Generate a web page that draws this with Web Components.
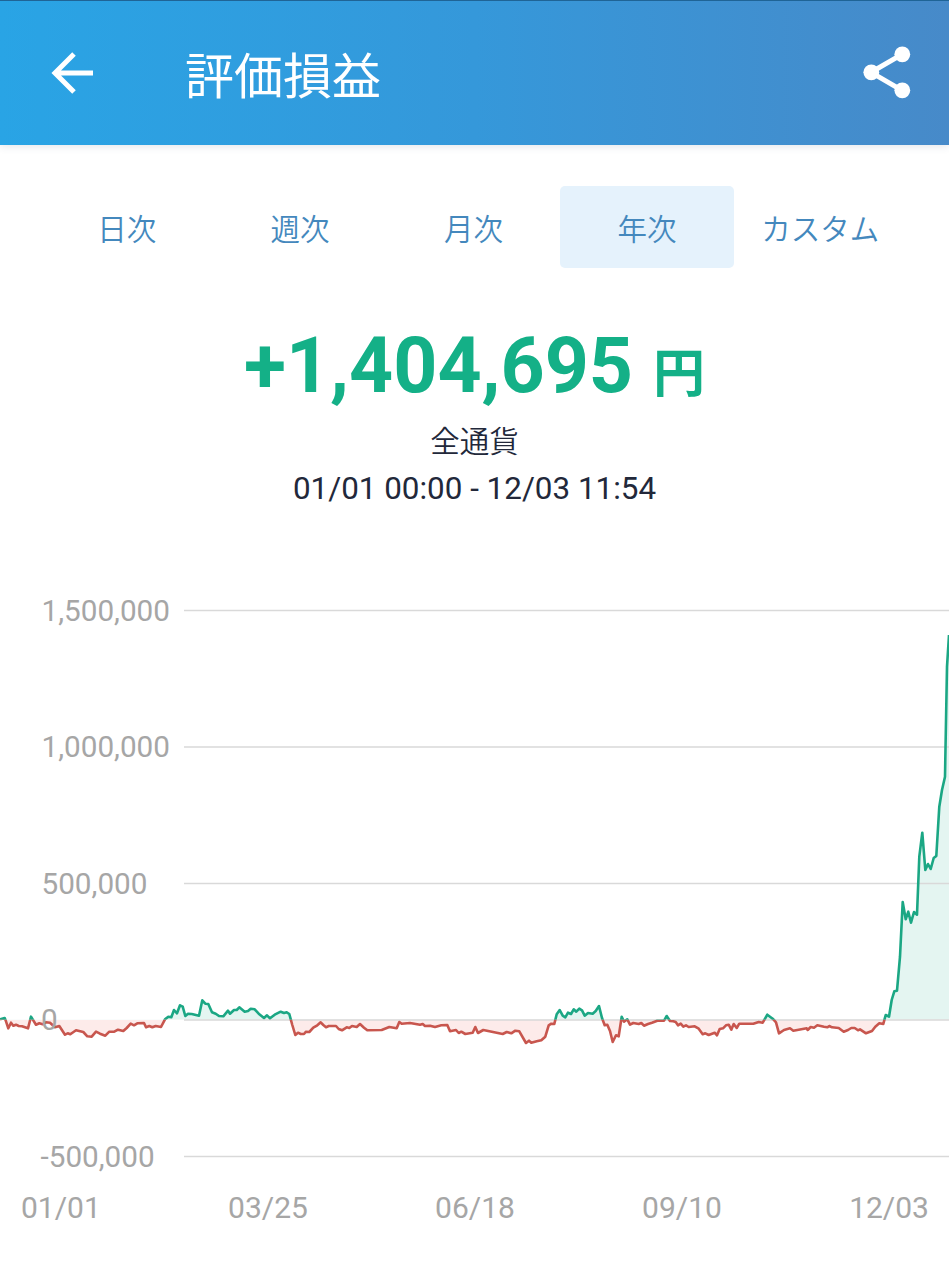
<!DOCTYPE html>
<html lang="ja">
<head>
<meta charset="UTF-8">
<title>評価損益</title>
<style>
  body {
    margin: 0;
    background: #fff;
    font-family: Roboto, "Noto Sans CJK JP", sans-serif;
  }
</style>
</head>
<body>
<profit-page>
  <app-header>評価損益</app-header>
  <period-tabs>
    <period-tab>日次</period-tab>
    <period-tab>週次</period-tab>
    <period-tab>月次</period-tab>
    <period-tab selected>年次</period-tab>
    <period-tab>カスタム</period-tab>
  </period-tabs>
  <profit-summary>
    <span slot="amount">+1,404,695</span>
    <span slot="unit">円</span>
    <span slot="currency">全通貨</span>
    <span slot="range">01/01 00:00 - 12/03 11:54</span>
  </profit-summary>
  <profit-chart></profit-chart>
</profit-page>

<script>
const define = (name, html, setup) => {
  const template = document.createElement("template");
  template.innerHTML = html;
  customElements.define(name, class extends HTMLElement {
    constructor() {
      super();
      const shadow = this.attachShadow({ mode: "open" });
      shadow.append(template.content.cloneNode(true));
      if (setup) setup(shadow);
    }
  });
};

define("profit-page", `
  <style>
    :host {
      display: flex;
      flex-direction: column;
      width: 949px;
      height: 1280px;
      overflow: hidden;
      background: #fff;
    }
  </style>
  <slot></slot>
`);

define("app-header", `
  <style>
    :host {
      display: flex;
      align-items: center;
      box-sizing: border-box;
      flex: none;
      height: 145px;
      padding: 0 31px 0 43px;
      border-top: 1px solid #1f6496;
      background: linear-gradient(90deg, #29a4e5 0%, #3598da 50%, #478ac9 100%);
      background-origin: border-box;
      box-shadow: 0 1px 8px rgba(60, 80, 110, 0.16);
      color: #fff;
    }
    h1 {
      flex: 1;
      margin: 0 0 0 82px;
      padding-top: 10px;
      font-size: 49px;
      line-height: 60px;
      font-weight: 400;
    }
    svg {
      display: block;
      flex: none;
    }
  </style>
  <svg width="60" height="60" viewBox="0 0 60 60" fill="none" stroke="#fff" stroke-width="5">
    <path d="M50 30H12M31 11L12 30L31 49"/>
  </svg>
  <h1><slot></slot></h1>
  <svg width="62" height="62" viewBox="0 0 62 62" fill="#fff" stroke="#fff">
    <path d="M46 12.300L15 30.300L46 48.300" fill="none" stroke-width="5"/>
    <circle cx="46.300" cy="12.300" r="7.900" stroke="none"/>
    <circle cx="15.300" cy="30.300" r="7.900" stroke="none"/>
    <circle cx="46.300" cy="48.300" r="7.900" stroke="none"/>
  </svg>
`);

define("period-tabs", `
  <style>
    :host {
      display: grid;
      grid-template-columns: repeat(5, 1fr);
      flex: none;
      height: 82px;
      margin: 41px 42px 0 40px;
    }
  </style>
  <slot></slot>
`);

define("period-tab", `
  <style>
    :host {
      display: flex;
      align-items: center;
      justify-content: center;
      box-sizing: border-box;
      padding-top: 5px;
      border-radius: 5px;
      color: #4488bd;
      font-size: 29.500px;
      line-height: 40px;
      font-weight: 350;
    }
    :host([selected]) {
      background: #e5f2fc;
    }
  </style>
  <slot></slot>
`);

define("profit-summary", `
  <style>
    :host {
      display: flex;
      flex-direction: column;
      align-items: center;
      flex: none;
      height: 282px;
      color: #22283a;
    }
    .amount {
      display: flex;
      align-items: baseline;
      gap: 20px;
      margin-top: 53px;
      height: 98px;
      line-height: 90px;
      color: #14b087;
      font-size: 77px;
      font-weight: 700;
    }
    .unit {
      font-size: 52px;
      line-height: 60px;
    }
    .currency {
      font-size: 29.500px;
      line-height: 46px;
      font-weight: 350;
    }
    .range {
      font-size: 31.400px;
      line-height: 48px;
    }
  </style>
  <div class="amount">
    <slot name="amount"></slot>
    <div class="unit"><slot name="unit"></slot></div>
  </div>
  <div class="currency"><slot name="currency"></slot></div>
  <div class="range"><slot name="range"></slot></div>
`);

// Samples in chart units, origin at the top left of the plot.
const POINTS = [
  [0, 469.300], [4.700, 468], [6, 471.300], [8.300, 478.300], [11, 472.700], [13.300, 475.700], [16, 474.700], [18.700, 476],
  [22, 476.300], [28, 478.300], [31, 466.700], [36, 474.700], [39.300, 473.300], [42.700, 474.300], [46, 472.300], [50, 472.700],
  [55, 477.300], [59.300, 476], [65, 484.700], [67.700, 483.300], [70.300, 484.300], [76, 480.300], [83.300, 482], [87.300, 486.300],
  [91.700, 486.700], [96, 481.700], [100, 483.700], [105.300, 485.700], [109.300, 481.700], [114.300, 481.700], [118, 479.700], [123.300, 481],
  [126.700, 478], [130.700, 473.700], [134, 475.300], [137.300, 473.300], [144, 473], [146, 477.300], [149.300, 476], [152.300, 477.300],
  [155.700, 476], [161, 477], [165, 469.300], [168.300, 466.700], [171.300, 467.300], [174, 460], [177, 463.300], [180, 455.300],
  [182.700, 456.700], [185.300, 466], [188, 463.700], [191.700, 464], [199, 465.700], [202.300, 450.300], [205.300, 453.700], [208.300, 454],
  [212, 462.300], [215.700, 463.700], [219, 466], [223.300, 466.300], [228, 460.700], [230, 463.700], [234, 460], [236.700, 460],
  [239.300, 457.300], [244.700, 461.700], [248, 461], [250.700, 458.700], [254.700, 459.300], [258.700, 463.700], [264, 468], [267, 465.300],
  [270, 468.300], [274.700, 464.700], [280.700, 461.700], [284, 463], [286.700, 462.300], [289.300, 464], [292.300, 475], [295.300, 485],
  [298, 482.700], [300.700, 484], [304, 484], [306, 481.700], [309.300, 482], [313.300, 477.700], [317.300, 475.300], [320.700, 472.300],
  [323.300, 475], [326, 477.300], [328.700, 476], [336, 476], [338.700, 479], [342, 480.300], [346.700, 477.300], [349.300, 478],
  [352, 476], [356.700, 477], [360, 474], [364, 477.700], [367.300, 480.300], [381.700, 480], [389.300, 477], [396.700, 478.300],
  [399.300, 472], [401.700, 473.700], [410, 473], [420, 474.700], [422.700, 474], [425, 476], [430, 475.700], [435, 477],
  [441.300, 475.300], [447.300, 475], [450, 481.300], [456, 480], [458.700, 483], [461.300, 481.700], [465.300, 484], [472.700, 482.700],
  [475.300, 477], [478, 483], [483.300, 480], [502.700, 484], [506.700, 482], [511.300, 483.300], [515.300, 480.700], [519.300, 481.300],
  [526, 493], [529, 490.700], [531.300, 492.700], [536.700, 491.300], [541.300, 490.300], [545.300, 486.700], [548.700, 475.300], [551.300, 473.700],
  [554.300, 474], [556.700, 464.300], [559.700, 460], [562.700, 465.700], [565.300, 467.300], [568, 462.700], [571, 464], [573.700, 459.300],
  [576.300, 461.700], [579.300, 458.700], [582, 460.300], [584.700, 465.700], [588, 463], [592.700, 463.700], [595.700, 461], [599, 456],
  [602, 468], [604.700, 475.300], [607.300, 474.700], [610, 481], [612.700, 492], [616, 485.300], [618.700, 486.300], [621.700, 466.700],
  [624, 471.700], [627.300, 469.300], [630, 474.700], [633.300, 473], [638.700, 474], [641.300, 473], [644, 475.700], [648, 474],
  [652, 472.700], [657.300, 470.700], [664, 470.700], [666.700, 466], [670, 471], [673.300, 471.300], [675.700, 472], [678, 475.300],
  [680.700, 473.700], [683.300, 476.700], [686, 475.300], [688.700, 477], [694.700, 476.300], [698.700, 478.700], [702.700, 484.300], [705.300, 483.300],
  [708.700, 485], [714.700, 482.700], [717, 485.300], [719.700, 479], [723, 478.300], [726, 475.300], [728.700, 474.700], [731.300, 479.700],
  [733.700, 474], [736.700, 478], [739.300, 473.700], [753.300, 473.700], [758.700, 472], [762.700, 472.700], [767.300, 464.700], [772.700, 468.700],
  [776, 472.300], [779, 483.300], [784, 480], [790, 478.300], [793.300, 480.700], [806.700, 478.300], [807.700, 480], [810.700, 477],
  [814, 477.700], [817.300, 475.300], [824, 476.700], [827.300, 477.300], [829.300, 476], [832, 477.300], [838.700, 478], [843.700, 481.700],
  [848, 480], [851.300, 478], [854.700, 478], [858, 480.300], [860, 479.300], [866, 483.300], [872, 481], [875.300, 476.700],
  [879.300, 473.300], [883.300, 474], [885.700, 465], [889, 466.700], [891.700, 450], [894.300, 441.300], [897, 440.700], [900, 406.700],
  [902.700, 352], [905.700, 369.300], [908.300, 361.700], [911, 372.700], [914, 362], [917, 364.700], [919.300, 306.700], [922.300, 282.700],
  [925.300, 320], [928, 314], [930.700, 319], [933.700, 308], [936.300, 306], [939.300, 256.700], [942, 240], [945, 226.700],
  [947, 116.700], [949, 85]
];
const ZERO = 469.7;
const Y_TICKS = [
  ["1,500,000", 60.5, 41.5],
  ["1,000,000", 197, 41.5],
  ["500,000", 333.5, 41.5],
  ["0", 470, 41],
  ["-500,000", 606.5, 40.5]
];

define("profit-chart", `
  <style>
    :host {
      display: flex;
      flex-direction: column;
      flex: 1;
      color: #a6a6a6;
      font-size: 30px;
    }
    svg {
      display: block;
      flex: none;
    }
    text {
      fill: #a6a6a6;
      font-size: 29.700px;
    }
    .grid line {
      stroke: #d9d9d9;
      stroke-width: 1.300;
    }
    .line {
      fill: none;
      stroke-width: 2.600;
      stroke-linejoin: round;
    }
    .gain .line { stroke: #1ba784; }
    .gain .area { fill: #e4f5f1; }
    .loss .line { stroke: #c8564e; }
    .loss .area { fill: #fdebea; }
    .dates {
      display: flex;
      justify-content: space-between;
      padding: 0 20px 0 21px;
      line-height: 36px;
      margin-top: 10px;
    }
  </style>
  <svg width="949" height="630" viewBox="0 0 949 630">
    <clipPath id="above"><rect width="949" height="${ZERO}"/></clipPath>
    <clipPath id="below"><rect y="${ZERO}" width="949" height="150"/></clipPath>
    <g class="gain" clip-path="url(#above)"><path class="area"/></g>
    <g class="loss" clip-path="url(#below)"><path class="area"/></g>
    <g class="grid"></g>
    <g class="gain" clip-path="url(#above)"><path class="line"/></g>
    <g class="loss" clip-path="url(#below)"><path class="line"/></g>
    <g class="labels"></g>
  </svg>
  <div class="dates">
    <span>01/01</span><span>03/25</span><span>06/18</span><span>09/10</span><span>12/03</span>
  </div>
`, (shadow) => {
  const path = "M" + POINTS.map((p) => p.join(" ")).join("L");
  shadow.querySelectorAll(".line").forEach((el) => el.setAttribute("d", path));
  shadow.querySelectorAll(".area").forEach((el) => el.setAttribute("d", `${path}V${ZERO}H0Z`));
  shadow.querySelector(".grid").innerHTML = Y_TICKS
    .map(([, y]) => `<line x1="184" x2="949" y1="${y}" y2="${y}"/>`).join("");
  shadow.querySelector(".labels").innerHTML = Y_TICKS
    .map(([label, y, x]) => `<text x="${x}" y="${y + 10.3}">${label}</text>`).join("");
});
</script>
</body>
</html>
